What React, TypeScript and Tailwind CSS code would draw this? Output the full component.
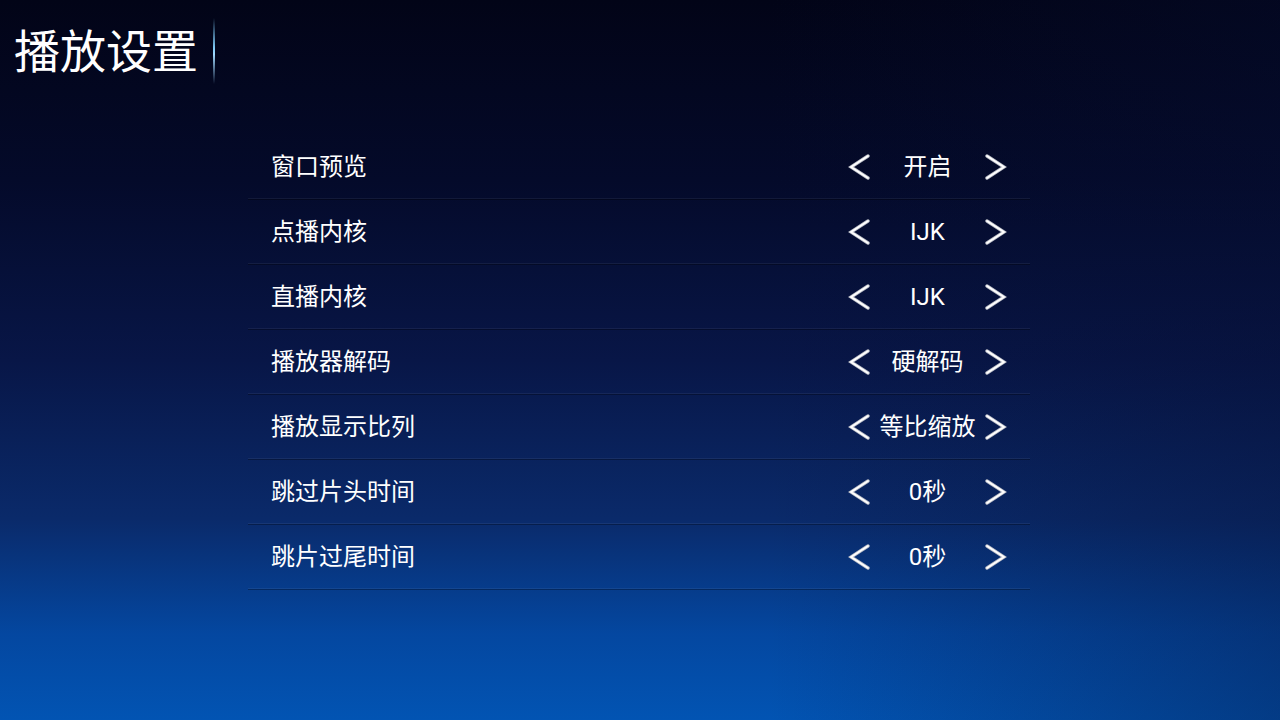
import React from "react"

const rows = [
  { label: "窗口预览", value: "开启" },
  { label: "点播内核", value: "IJK" },
  { label: "直播内核", value: "IJK" },
  { label: "播放器解码", value: "硬解码" },
  { label: "播放显示比列", value: "等比缩放" },
  { label: "跳过片头时间", value: "0秒" },
  { label: "跳片过尾时间", value: "0秒" },
]

function Arrow({ dir }: { dir: "left" | "right" }) {
  const d = dir === "left" ? "M20 2 L3 13 L20 24" : "M2 2 L19 13 L2 24"
  return (
    <svg width="22" height="26" viewBox="0 0 22 26" className="shrink-0">
      <path d={d} fill="none" stroke="#b9bcc6" strokeWidth="3.4" strokeLinecap="round" strokeLinejoin="miter" />
      <path d={d} fill="none" stroke="#ffffff" strokeWidth="1.8" strokeLinecap="round" strokeLinejoin="miter" />
    </svg>
  )
}

export default function App() {
  const font = { fontFamily: "Roboto, 'Noto Sans CJK SC', sans-serif" }

  return (
    <div
      className="w-[1280px] h-[720px] overflow-hidden text-white bg-[linear-gradient(180deg,#020417_0%,#040a2a_25%,#081647_50%,#0a2a6a_72%,#0447a0_88%,#0254b3_100%)]"
      style={font}
    >
      <div className="h-full w-full bg-[linear-gradient(90deg,rgba(0,0,0,0)_0%,rgba(0,0,0,0)_60%,rgba(6,14,50,0.35)_100%)]">
        {/* HEADER */}
        <div className="flex items-center h-[102px] pl-[14px]">
          <h1 className="text-[46px] leading-none font-normal mt-[2px]">播放设置</h1>
          <div className="ml-[15px] w-[2px] h-[66px] bg-[linear-gradient(180deg,rgba(90,180,240,0)_0%,#7cc8f5_45%,#9fd8ff_55%,rgba(90,180,240,0)_100%)]" />
        </div>

        {/* LISTA */}
        <div className="w-[782px] ml-[248px] mt-[33px]">
          {rows.map((r, i) => (
            <div key={i} className="h-[65px] flex flex-col">
              <div className="flex-1 flex items-center justify-between pl-[23px] pr-[23px]">
                <span className="text-[24px] leading-none">{r.label}</span>
                <div className="flex items-center">
                  <Arrow dir="left" />
                  <span className="w-[115px] text-center text-[24px] leading-none">{r.value}</span>
                  <Arrow dir="right" />
                </div>
              </div>
              <div className="h-[1px] bg-white/[0.06]" />
              <div className="h-[1px] bg-black/30" />
            </div>
          ))}
        </div>
      </div>
    </div>
  )
}
